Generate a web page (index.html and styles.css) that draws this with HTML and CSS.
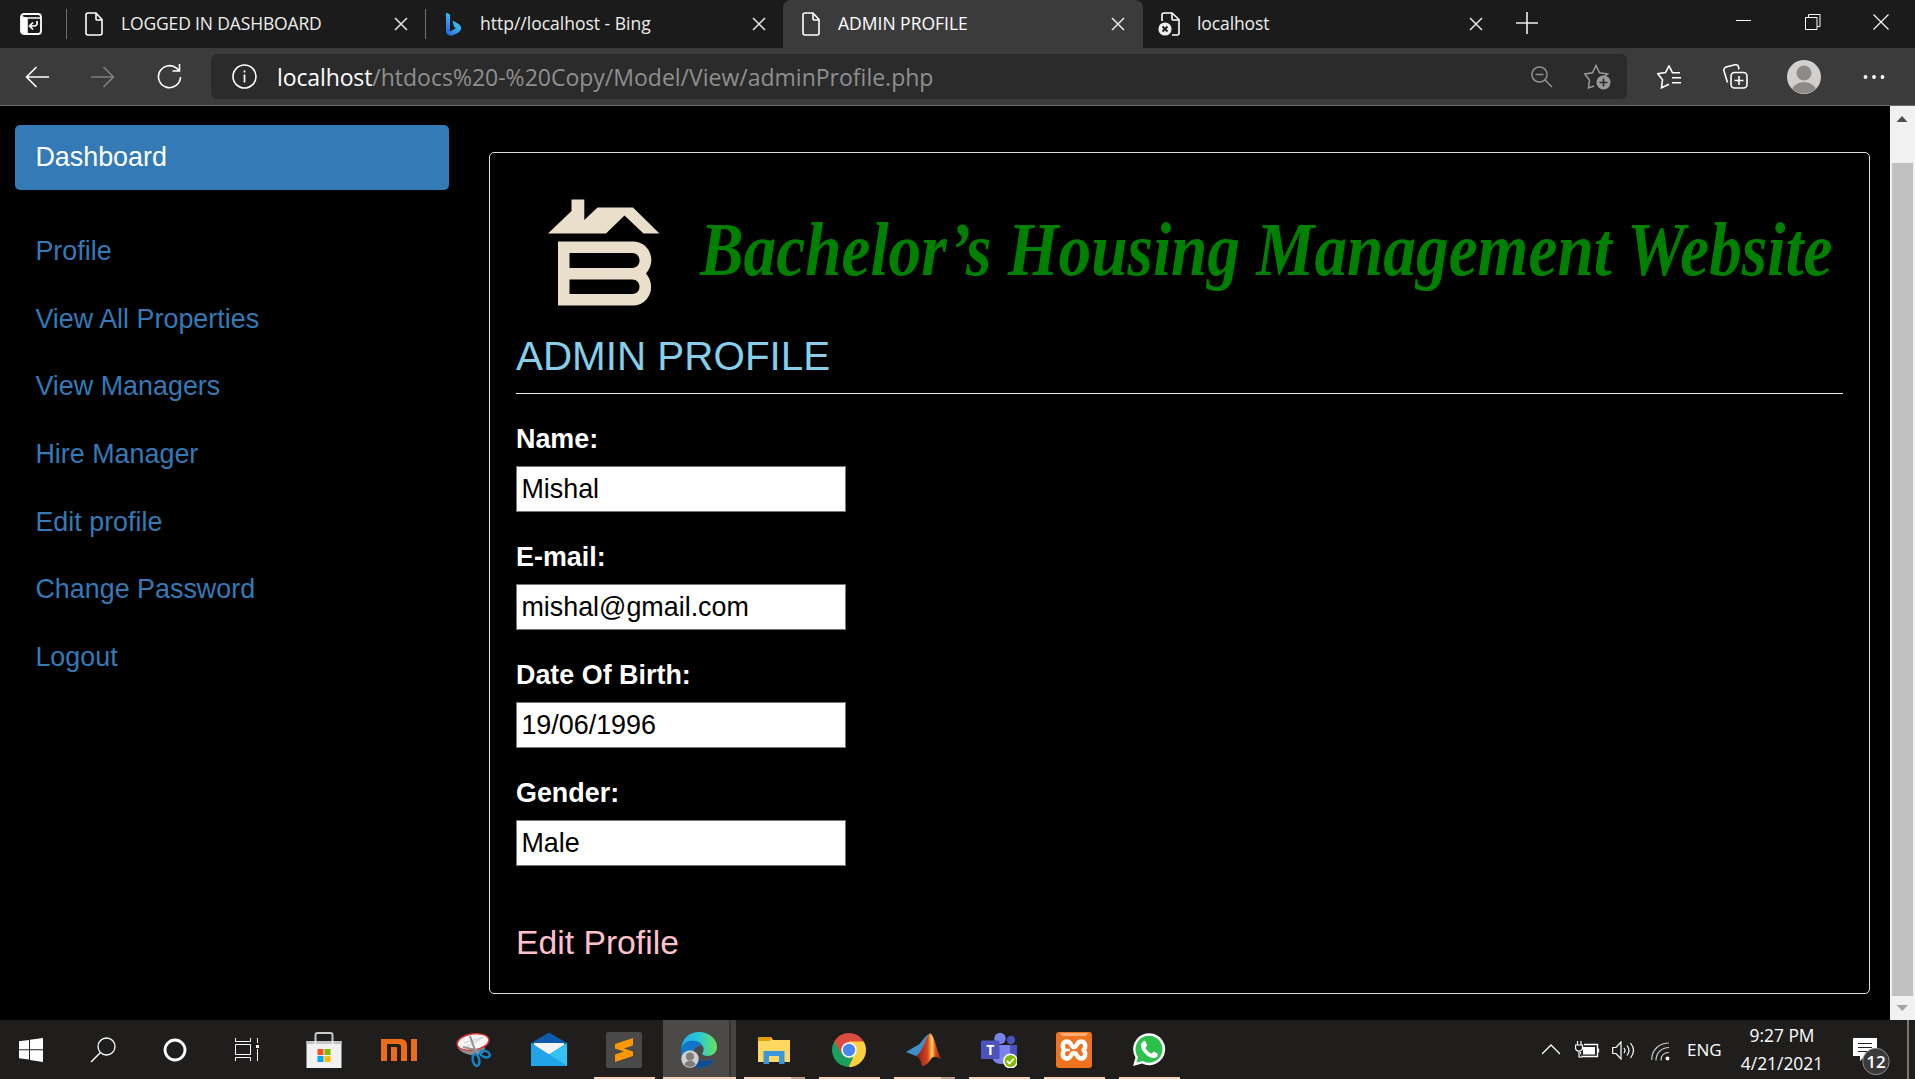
FILE: index.html
```html
<!DOCTYPE html>
<html lang="en">
<head>
<meta charset="utf-8">
<title>ADMIN PROFILE</title>
<link rel="stylesheet" href="styles.css">
</head>
<body>
<svg class="defs" width="0" height="0">
  <symbol id="doc" viewBox="0 0 18 24"><path d="M3 1h8l6 6.5V21a2 2 0 0 1-2 2H3a2 2 0 0 1-2-2V3a2 2 0 0 1 2-2zM11 1v6a1 1 0 0 0 1 1h5" fill="none" stroke="#fff" stroke-width="1.6"/></symbol>
  <symbol id="x" viewBox="0 0 14 14"><path d="M1 1l12 12M13 1L1 13" fill="none" stroke="#e8e8e8" stroke-width="1.5"/></symbol>
</svg>

<header class="tabs">
  <div class="tab-actions">
    <svg width="22" height="22" viewBox="0 0 22 22"><rect x="1" y="1" width="20" height="20" rx="3" fill="none" stroke="#fff" stroke-width="1.8"/><path d="M2 5h19M2 3v17h5V5" fill="#fff" stroke="#fff" stroke-width="1.6"/><path d="M17 8v2.500a2.500 2.500 0 0 1-2.500 2.500H10M13 9.500L9.500 13l3.500 3.500" fill="none" stroke="#fff" stroke-width="1.700"/></svg>
  </div>
  <div class="tab"><svg class="doc" width="18" height="24"><use href="#doc"/></svg><span class="t1">LOGGED IN DASHBOARD</span><svg class="close" width="14" height="14"><use href="#x"/></svg></div>
  <div class="tab"><svg class="bing" width="18" height="24" viewBox="0 0 18 24"><defs><linearGradient id="bg1" x1="0" y1="0" x2="0" y2="1"><stop offset="0" stop-color="#37bdff"/><stop offset="1" stop-color="#2b61e8"/></linearGradient><linearGradient id="bg2" x1="0" y1="1" x2="1" y2="0"><stop offset="0" stop-color="#2860e6"/><stop offset="1" stop-color="#3fd9f0"/></linearGradient></defs><path d="M2 .5l4 2V18l-1 3.500L2 19z" fill="url(#bg1)"/><path d="M8.500 8.500l6 3.500c4 2.500 3 7-1 9l-5 2.500C4.500 24 2 22 2 18.500c1 1.500 3 1.800 5 .5l5-3-2-1z" fill="url(#bg2)"/></svg><span class="t2">http//localhost - Bing</span><svg class="close" width="14" height="14"><use href="#x"/></svg></div>
  <div class="tab active"><svg class="doc" width="18" height="24"><use href="#doc"/></svg><span class="t3">ADMIN PROFILE</span><svg class="close" width="14" height="14"><use href="#x"/></svg></div>
  <div class="tab last"><svg class="err" width="22" height="24" viewBox="0 0 22 24"><path d="M4 9V3a2 2 0 0 1 2-2h8l7 6.500V21a2 2 0 0 1-2 2h-5M14 1v6a1 1 0 0 0 1 1h6" fill="none" stroke="#fff" stroke-width="1.600"/><circle cx="7" cy="17" r="6.600" fill="#eee"/><path d="M4.500 14.500l5 5M9.500 14.500l-5 5" stroke="#1b1b1b" stroke-width="1.800"/></svg><span class="t4">localhost</span><svg class="close" width="14" height="14"><use href="#x"/></svg></div>
  <svg class="plus" width="22" height="22" viewBox="0 0 22 22"><path d="M11 0v22M0 11h22" stroke="#eee" stroke-width="1.600"/></svg>
  <div class="window-buttons">
    <svg width="16" height="16" viewBox="0 0 16 16"><path d="M0 6.500h15" stroke="#fff"/></svg>
    <svg width="16" height="16" viewBox="0 0 16 16"><path d="M.5 3.500h11.500v12H.5zM3.500 3V.5H15v12h-3" fill="none" stroke="#fff"/></svg>
    <svg width="16" height="16" viewBox="0 0 16 16"><path d="M.5 .5l15 15M15.500 .5l-15 15" stroke="#fff" stroke-width="1.100"/></svg>
  </div>
</header>

<nav class="toolbar">
  <svg class="back" width="24" height="22" viewBox="0 0 24 22"><path d="M24 11H1.500M11.500 1L1.500 11l10 10" fill="none" stroke="#fff" stroke-width="1.600"/></svg>
  <svg class="fwd" width="24" height="22" viewBox="0 0 24 22"><path d="M0 11h22.500M12.500 1l10 10-10 10" fill="none" stroke="#808080" stroke-width="1.600"/></svg>
  <svg class="reload" width="25" height="25" viewBox="0 0 25 25"><path d="M23.500 13A11 11 0 1 1 19.500 4.200L22 6.500M22.500 0v7h-7" fill="none" stroke="#fff" stroke-width="1.600"/></svg>
  <div class="address">
    <svg class="info" width="25" height="25" viewBox="0 0 25 25"><circle cx="12.500" cy="12.500" r="11.500" fill="none" stroke="#fff" stroke-width="1.600"/><path d="M12.500 10.500v8M12.500 6.500v2" stroke="#fff" stroke-width="1.700"/></svg>
    <span class="url"><b>localhost</b>/htdocs%20-%20Copy/Model/View/adminProfile.php</span>
    <svg class="zoom" width="22" height="22" viewBox="0 0 22 22"><path d="M13.500 13.500L21 21M4.500 8.500h8" stroke="#8f8f8f" stroke-width="1.500"/><circle cx="8.500" cy="8.500" r="7.600" fill="none" stroke="#8f8f8f" stroke-width="1.500"/></svg>
    <svg class="star" width="27" height="26" viewBox="0 0 27 26"><path d="M10 22l-5.500 2 1-8L.8 10l7.700-1.200L12 1.500l3.500 7.300L23.500 10l-3 2.500" fill="none" stroke="#9a9a9a" stroke-width="1.500"/><circle cx="19.500" cy="18.500" r="7" fill="#9a9a9a"/><path d="M19.500 14.500v8M15.500 18.500h8" stroke="#2b2b2b" stroke-width="1.600"/></svg>
  </div>
  <svg class="favs" width="25" height="24" viewBox="0 0 25 24"><path d="M12 19.500l-7.500 3.500 1-8L.8 9l7.700-1.200L12 1l3.500 7H23M15 13h9M15 18h9" fill="none" stroke="#fff" stroke-width="1.600" transform="translate(0 -.2)"/></svg>
  <svg class="coll" width="25" height="25" viewBox="0 0 25 25"><rect x="8" y="8.500" width="16" height="15.500" rx="3.500" fill="none" stroke="#fff" stroke-width="1.600"/><path d="M16 12v9M11.500 16.500h9M4.500 18.500L1 7c-.5-2 0-3 2-4l9-2.200c2-.3 3 .2 3.500 2L16 5.500" fill="none" stroke="#fff" stroke-width="1.600"/></svg>
  <svg class="avatar" width="34" height="34" viewBox="0 0 34 34"><clipPath id="ac"><circle cx="17" cy="17" r="16.500"/></clipPath><circle cx="17" cy="17" r="17" fill="#d2d0ce"/><g clip-path="url(#ac)" fill="#8e8a87"><circle cx="17" cy="13" r="7.500"/><ellipse cx="17" cy="32" rx="12.500" ry="10"/></g></svg>
  <svg class="dots" width="22" height="6" viewBox="0 0 22 6" fill="#fff"><circle cx="2.500" cy="3" r="1.900"/><circle cx="11" cy="3" r="1.900"/><circle cx="19.500" cy="3" r="1.900"/></svg>
</nav>

<div class="viewport">
  <aside class="sidebar">
    <a class="current">Dashboard</a>
    <ul>
      <li><a>Profile</a></li>
      <li><a>View All Properties</a></li>
      <li><a>View Managers</a></li>
      <li><a>Hire Manager</a></li>
      <li><a>Edit profile</a></li>
      <li><a>Change Password</a></li>
      <li><a>Logout</a></li>
    </ul>
  </aside>
  <main class="panel">
    <div class="brand">
      <svg class="logo" width="112" height="108" viewBox="0 0 112 108"><path d="M0 34.500L23.500 12V.5h12.800v20.500L49.500 8.500H85l26.500 26H95.500L76.500 16.500 58 34.500z" fill="#eadfca"/><path fill-rule="evenodd" d="M10 42.500h76c16 1 23 20 12 32 11 13 3 31-12 32H10zM21.500 54v15H84c10 0 10-15 0-15zM21.500 80.500v14.500H84c10 0 10-14.500 0-14.500z" fill="#eadfca"/></svg>
      <h1 class="site-title">Bachelor’s Housing Management Website</h1>
    </div>
    <h2>ADMIN PROFILE</h2>
    <form>
      <label>Name:</label><input type="text" value="Mishal">
      <label>E-mail:</label><input type="text" value="mishal@gmail.com">
      <label>Date Of Birth:</label><input type="text" value="19/06/1996">
      <label>Gender:</label><input type="text" value="Male">
    </form>
    <a class="edit">Edit Profile</a>
  </main>
  <div class="scrollbar">
    <svg width="25" height="57" viewBox="0 0 25 57"><path d="M6.500 16l5.500-6 5.500 6z" fill="#505050"/></svg>
    <div class="thumb"></div>
    <svg width="25" height="24" viewBox="0 0 25 24"><path d="M6.500 9h11.500l-5.700 6z" fill="#a3a3a3"/></svg>
  </div>
</div>

<footer class="taskbar">
  <div class="sys first"><svg viewBox="0 0 36 36"><path d="M6 9.200l10-1.200v9.200H6zM17 7.800L30 6v11.200H17zM6 18.200h10v9.300L6 26.200zM17 18.200h13V30l-13-1.900z" fill="#fff"/></svg></div>
  <div class="sys"><svg viewBox="0 0 36 36"><circle cx="21.500" cy="14.500" r="8.500" fill="none" stroke="#fff" stroke-width="1.300"/><path d="M15.500 20.500L6 30" stroke="#fff" stroke-width="1.500"/></svg></div>
  <div class="sys"><svg viewBox="0 0 36 36"><circle cx="18" cy="18" r="10" fill="none" stroke="#fff" stroke-width="2.800"/></svg></div>
  <div class="sys"><svg viewBox="0 0 36 36"><path d="M6.500 6v3.500h15V6M6.500 12.500h15v10h-15zM6.500 29v-3.500h15V29M28.500 6v5M28.500 17v12" fill="none" stroke="#fff"/><path d="M27 13h3v3h-3z" fill="#fff"/></svg></div>
  <div class="app gap"><svg viewBox="0 0 36 36"><path d="M9.500 12V3c0-1.500 1-2 2-2h13c1 0 2 .5 2 2v9" fill="none" stroke="#c9c9c9" stroke-width="2"/><path d="M.5 9h35v27H.5z" fill="#f1f1f1"/><path d="M.5 9h35v3H.5z" fill="#c4c4c4"/><path d="M9.500 12V9M26.500 12V9" stroke="#eee" stroke-width="2"/><path d="M11.500 17h6v6h-6z" fill="#f25022"/><path d="M18.500 17h6v6h-6z" fill="#7fba00"/><path d="M11.500 24h6v6h-6z" fill="#00a4ef"/><path d="M18.500 24h6v6h-6z" fill="#ffb900"/></svg></div>
  <div class="app"><svg viewBox="0 0 36 36" fill="#ed6c1c"><path d="M0 7h19c5 0 7 2 7 7v15h-6V15q0-3-3-3H6v17H0zM10 15h6v14h-6zM30 7h6v22h-6z"/></svg></div>
  <div class="app"><svg viewBox="0 0 36 36"><ellipse cx="15" cy="15" rx="14" ry="8" fill="#8e8e8e" transform="rotate(12 15 15)"/><ellipse cx="17" cy="10" rx="16" ry="8" fill="#f5f5f5" stroke="#d93838" stroke-width="1.500" transform="rotate(-9 17 10)"/><path d="M8 11l20-6M10 15L26 6" stroke="#c9cbcd"/><path d="M14 4l6 17M7 15l17 4" stroke="#8d9297" stroke-width="2"/><ellipse cx="20" cy="28" rx="3.200" ry="6" fill="none" stroke="#1583c8" stroke-width="2.500" transform="rotate(-12 20 28)"/><ellipse cx="29" cy="22" rx="5" ry="3" fill="none" stroke="#1583c8" stroke-width="2.500" transform="rotate(20 29 22)"/></svg></div>
  <div class="app"><svg viewBox="0 0 36 36"><path d="M0 11L18 .5 36 11v3H0z" fill="#0b5cad"/><path d="M3 11h30v11H3z" fill="#f3f3f3"/><path d="M0 11l18 11.500L36 11v23H0z" fill="#1c9de8"/><path d="M36 11v23L18 22.500z" fill="#35c3f3"/><path d="M0 34L0 11l36 23z" fill="#22a4e8"/></svg></div>
  <div class="app run"><svg viewBox="0 0 36 36"><rect width="36" height="36" rx="2" fill="#494949"/><path d="M9 12l18-6v7.500l-9 3 9 3V24L9 30v-7.500l9-3-9-3z" fill="#ff9800"/></svg></div>
  <div class="app run focus"><svg viewBox="0 0 36 36"><defs><linearGradient id="e1"><stop offset="0" stop-color="#24a7e8"/><stop offset=".5" stop-color="#2ac8d8"/><stop offset="1" stop-color="#6be356"/></linearGradient></defs><path d="M0 19C0 7 8 0 18 0s18 7 18 15c0 9-11 11-15 7 5-7-2-13-9-13C5 9 1 13 0 19z" fill="url(#e1)"/><path d="M0 18C2 6 18 7 21 14c-5-1-8 2-8 7 0 8 11 10 20 6-4 8-13 10-20 8C5 34 0 26 0 18z" fill="#1175ca"/><path d="M13 20c0 9 12 11 20 7-4 8-13 10-20 8-5-4-4-11 0-15z" fill="#0e4d96"/><circle cx="9" cy="27" r="8.700" fill="#cfcfcf"/><circle cx="9" cy="24.500" r="4" fill="#817d7a"/><path d="M3.500 33c1-6 10-6 11 0a9 9 0 0 1-11 0z" fill="#817d7a"/></svg></div>
  <div class="app run multi"><svg viewBox="0 0 36 36"><path d="M2 5h13l2 3h17v22H2z" fill="#ffd861"/><path d="M2 5h13l1 1-2 3H2z" fill="#e0a000"/><path d="M7.500 32V19h21v13h-5.500v-8H13v8z" fill="#3d96dc"/></svg></div>
  <div class="app run"><svg viewBox="0 0 36 36"><path d="M18 18L3.300 9.500A17 17 0 0 1 32.700 9.500z" fill="#db4c3f"/><path d="M18 18V9.500h14.700A17 17 0 0 1 18 35z" fill="#fdd040"/><path d="M18 18l4 8-4.500 9A17 17 0 0 1 3.300 9.500z" fill="#1a9f60"/><path d="M3.300 9.500L11 22l7-12.500z" fill="#db4c3f"/><circle cx="18" cy="18" r="7.700" fill="#fff"/><circle cx="18" cy="18" r="6.200" fill="#4a86f0"/></svg></div>
  <div class="app run multi"><svg viewBox="0 0 36 36"><defs><linearGradient id="m1"><stop offset="0" stop-color="#7c1c18"/><stop offset=".45" stop-color="#d9441e"/><stop offset=".62" stop-color="#ffd352"/><stop offset=".75" stop-color="#d84a20"/><stop offset="1" stop-color="#8b1613"/></linearGradient></defs><path d="M0 20l10-6c5-1 6-8 13-12l-8 23-5-1z" fill="#3e8fc7"/><path d="M10 24C17 20 19 7 24 1c5 3 7 20 12 27-5-4-9-4-11-1-2 3-5 7-9 7-1-5-2-8-6-10z" fill="url(#m1)"/></svg></div>
  <div class="app run"><svg viewBox="0 0 36 36"><circle cx="30" cy="8" r="4.200" fill="#4b53bc"/><path d="M26 13h10v9c0 4-4 6-8 6z" fill="#4b53bc"/><circle cx="19" cy="6.500" r="5.700" fill="#7b83eb"/><path d="M11 13h18v10c0 6-4 9-9 9s-9-3-9-9z" fill="#7b83eb"/><rect y="8.500" width="18.500" height="18.500" rx="1.500" fill="#4b53bc"/><text x="9.200" y="22.500" class="teams">T</text><circle cx="29.500" cy="29" r="7.500" fill="#fff"/><circle cx="29.500" cy="29" r="6" fill="#7fba00"/><path d="M26 29l2.500 2.500 4.500-5" fill="none" stroke="#fff" stroke-width="1.800"/></svg></div>
  <div class="app run"><svg viewBox="0 0 36 36"><rect width="36" height="36" rx="3" fill="#f0731f"/><path d="M4 1h28l-2 3H6z" fill="#f9ac76"/><path d="M8.500 18C5.500 15 6.500 9.500 11 9.500c4.500 0 3.500 5.500 7 5.500s2.500-5.500 7-5.500 5.500 5.500 2.500 8.500c3 3 2 8.500-2.500 8.500S21.500 21 18 21s-2.500 5.500-7 5.500S5.500 21 8.500 18z" fill="none" stroke="#fff" stroke-width="4.400" stroke-linejoin="round"/><path d="M9 18h5" stroke="#fff" stroke-width="2.500"/></svg></div>
  <div class="app run"><svg viewBox="0 0 36 36"><path d="M2 34l2.500-8.500A16 16 0 1 1 11 31.500z" fill="#fff"/><path d="M5.500 30.500L7 25a13.500 13.500 0 1 1 4.500 4z" fill="#2cc14c"/><path d="M12 9.500c1.500-1.500 2.500-.5 3 1l1 2.500c.3 1-1.500 2-1.500 3 1.500 3 3.500 4.500 6 5.500 1 0 1.500-2 2.500-2l3.500 2c.7.500 0 3-1 3.700-3 2-7 .3-10-2.200-3.500-3-6.500-7.500-5.500-11z" fill="#fff"/></svg></div>

  <div class="tray">
    <svg class="chev" width="18" height="11" viewBox="0 0 18 11"><path d="M0 10L9 1l9 9" fill="none" stroke="#fff" stroke-width="1.300"/></svg>
    <svg class="batt" width="25" height="17" viewBox="0 0 25 17"><path d="M9 3.500h13.500v12h-17V11M23.500 7.500v4" fill="none" stroke="#fff" stroke-width="1.300"/><path d="M8 6h12v7.500H8z" fill="#fff"/><path d="M2.500 0v4M6 0v4M.5 4h7v2.500a3.500 3.500 0 0 1-7 0zM4 10v6h3" fill="#1f1e1d" stroke="#fff" stroke-width="1.200"/></svg>
    <svg class="vol" width="23" height="19" viewBox="0 0 23 19"><path d="M.7 6.500H4l5-5.500v17l-5-5.500H.7zM12 7q2 2.500 0 5M15 4.500q4 5 0 10M18.500 2q6 7.500 0 15" fill="none" stroke="#fff" stroke-width="1.200"/></svg>
    <svg class="wifi" width="19" height="19" viewBox="0 0 19 19"><path d="M.7 18C.7 8 8 1 18 1M5 18.500C5 11 10.500 5.500 18 5.500M10 18.500c0-5 3-8 8-8" fill="none" stroke="#ccc" stroke-width="1.200"/><circle cx="16.500" cy="16.500" r="1.900" fill="#fff"/></svg>
    <span class="lang">ENG</span>
    <div class="clock"><span>9:27 PM</span><span>4/21/2021</span></div>
    <svg class="notif" width="38" height="38" viewBox="0 0 38 38"><path d="M0 1h24v18H12l-5 5v-5H0z" fill="#fff"/><path d="M5 6.500h14M5 10.500h14M5 14.500h9" stroke="#222"/><circle cx="23" cy="24.500" r="13.200" fill="#3a3a3a" stroke="#8b8b8b"/><text x="23" y="31">12</text></svg>
    <div class="peek"></div>
  </div>
</footer>
</body>
</html>
```
FILE: styles.css
```css
* { box-sizing: border-box; }
body { margin: 0; width: 1915px; height: 1079px; overflow: hidden; background: #000; display: flex; flex-direction: column; font-family: "Liberation Sans", Arial, sans-serif; }
svg { display: block; flex: none; }
.defs { position: absolute; }

.tabs { height: 48px; flex: none; display: flex; background: #1b1b1b; font: 17.5px "Open Sans", "Segoe UI", sans-serif; color: #eee; }
.tab-actions { width: 66px; padding: 13px 0 0 20px; }
.tab { width: 359px; height: 48px; display: flex; align-items: center; padding: 0 17px 0 19px; position: relative; white-space: nowrap; }
.tab::before { content: ""; position: absolute; left: 0; top: 9px; width: 1px; height: 30px; background: #707070; }
.tab:nth-child(3) { width: 358px; }
.tab.active { width: 360px; background: #3b3b3b; border-radius: 8px 8px 0 0; color: #fff; padding-right: 18px; }
.tab.active::before, .tab.last::before { display: none; }
.tab.last { width: 357px; padding-left: 15px; }
.tab span { margin-left: 18px; line-height: 24px; margin-top: -2px; }
.tab .t1 { letter-spacing: -0.15px; }
.tab .err + span { margin-left: 17px; letter-spacing: -0.1px; }
.tab .close { margin-left: auto; }
.plus { margin: 12px 0 0 16px; }
.window-buttons { margin-left: auto; padding: 14px 26px 0 0; display: flex; gap: 52.5px; }

.toolbar { height: 58px; flex: none; display: flex; align-items: center; background: #3b3b3b; border-bottom: 1px solid #6a6a6a; }
.back { margin-left: 25px; }
.fwd { margin-left: 42px; }
.reload { margin-left: 42px; }
.address { margin-left: 29px; width: 1416px; height: 45px; background: #2b2b2b; border-radius: 6px; display: flex; align-items: center; padding: 0 16px 0 21px; }
.url { margin-left: 20px; flex: 1; font: 23px/32px "Open Sans", "Segoe UI", sans-serif; color: #8f8f8f; white-space: nowrap; }
.url b { font-weight: 400; color: #fff; letter-spacing: -0.12px; }
.star { margin-left: 31px; }
.favs { margin-left: 30px; }
.coll { margin-left: 41px; }
.avatar { margin-left: 39px; }
.dots { margin-left: 42px; }

.viewport { height: 914px; flex: none; display: flex; }
.sidebar { width: 489px; padding: 19px 40px 0 15px; font-size: 26.9px; line-height: 38px; }
.current { display: block; height: 65px; padding: 13px 20.4px; background: #337ab7; color: #fff; border-radius: 5px; }
.sidebar ul { list-style: none; margin: 27px 0 0; padding: 0; }
.sidebar li { height: 67.7px; padding: 15px 20.4px; }
.sidebar li a { color: #337ab7; display: block; }

.panel { width: 1381px; height: 842px; margin-top: 46px; border: 1px solid #ddd; border-radius: 5px; padding: 0 26px; display: flex; flex-direction: column; }
.brand { height: 177px; display: flex; }
.logo { margin: 46px 0 0 32px; }
.site-title { margin: 51px 0 0 40px; width: 1143px; color: #008000; font: italic 700 77px/90px "Brush Script MT", "Liberation Serif", cursive; white-space: nowrap; transform: scaleX(.848); transform-origin: 0 0; }
h2 { margin: 0; height: 64px; border-bottom: 1px solid #eee; color: #87ceeb; font-size: 40.4px; font-weight: 400; line-height: 53px; }
form { display: flex; flex-direction: column; align-items: flex-start; }
label { height: 72px; padding-top: 27px; color: #fff; font-weight: 700; font-size: 26.9px; line-height: 37px; }
input { width: 330px; height: 46px; border: 1px solid #767676; padding: 0 4.4px; background: #fff; color: #000; font: 26.9px "Liberation Sans", Arial, sans-serif; }
.edit { margin-top: 52px; color: #ffc0cb; font-size: 33.7px; line-height: 48px; }

.scrollbar { margin-left: 20px; width: 25px; background: #f1f1f1; display: flex; flex-direction: column; }
.thumb { flex: 1; margin: 0 2px; background: #c1c1c1; }

.taskbar { height: 59px; flex: none; display: flex; background: #1f1e1d; color: #fff; font: 18px "Open Sans", "Segoe UI", sans-serif; }
.sys { width: 72px; padding: 12px 18px 0; }
.sys.first { width: 67px; padding-left: 13px; padding-right: 18px; }
.sys svg, .app svg { width: 36px; height: 36px; }
.app { width: 75px; height: 59px; padding: 12px 19.5px 0; position: relative; }
.app.gap { margin-left: 3px; }
.run::after { content: ""; position: absolute; left: 8px; bottom: 0; width: 61px; height: 2px; background: #fbd0b4; }
.multi::after { background: linear-gradient(90deg, #fbd0b4 47px, #c39f8b 47px); }
.focus { background: linear-gradient(90deg, transparent 2px, #4c4a49 2px, #4c4a49 68px, #333 68px, #333 70px, #454443 70px); }
.focus::after { left: 2px; width: 73px; }
.teams { font: 700 14px "Open Sans", sans-serif; fill: #fff; text-anchor: middle; }
.tray { margin-left: auto; display: flex; width: 373px; align-items: flex-start; }
.chev { margin-top: 24px; }
.batt { margin: 21px 0 0 15px; }
.vol { margin: 21px 0 0 12px; }
.wifi { margin: 22px 0 0 16px; }
.lang { width: 33px; margin: 17px 0 0 17px; line-height: 26px; font-size: 17px; }
.clock { width: 90px; margin: 1px 0 0 17px; display: flex; flex-direction: column; align-items: center; line-height: 28px; font-size: 17.4px; white-space: nowrap; }
.notif { margin: 17px 0 0 26px; }
.notif text { font: 600 17px "Open Sans", sans-serif; fill: #fff; text-anchor: middle; }
.peek { width: 2px; height: 59px; margin-left: 16px; background: #777; }
```
